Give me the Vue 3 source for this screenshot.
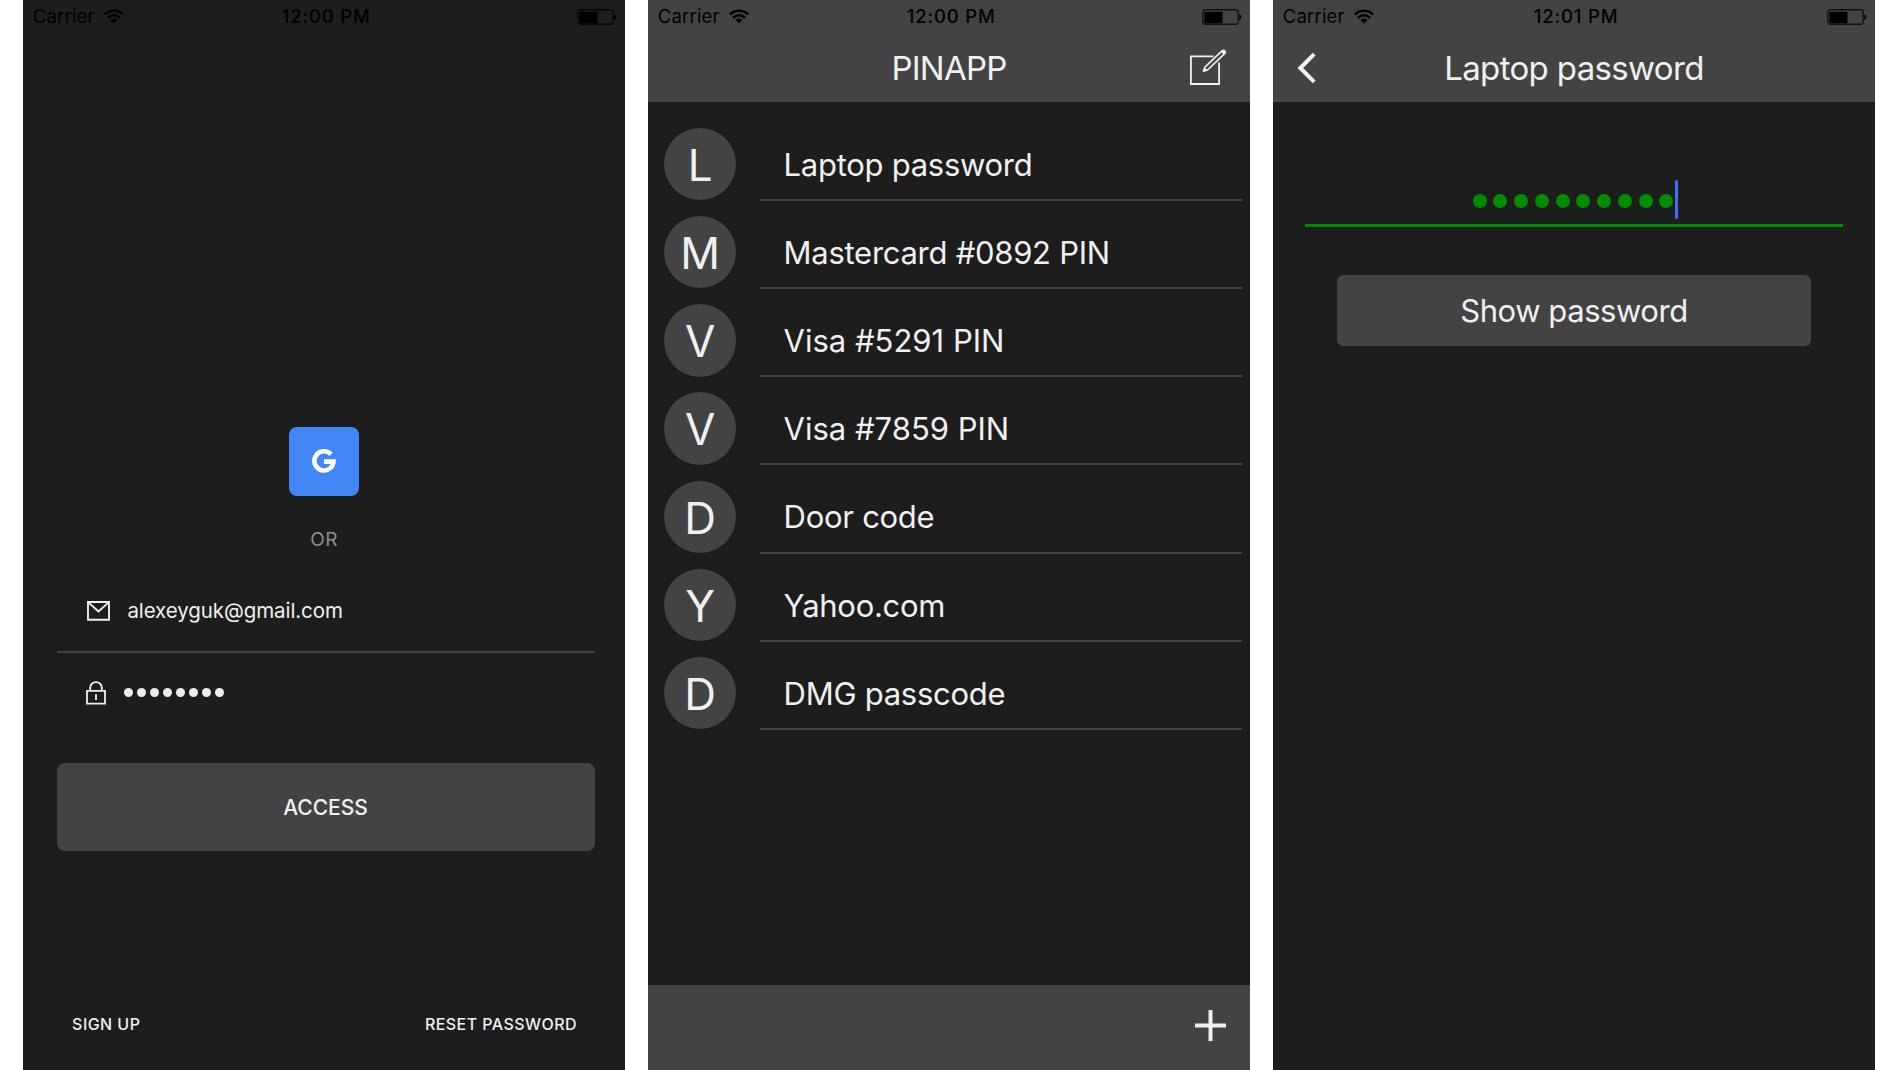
<script setup>
const screens = [
  { id: 'login', time: '12:00 PM' },
  { id: 'list', time: '12:00 PM' },
  { id: 'detail', time: '12:01 PM' },
]

const items = [
  'Laptop password',
  'Mastercard #0892 PIN',
  'Visa #5291 PIN',
  'Visa #7859 PIN',
  'Door code',
  'Yahoo.com',
  'DMG passcode',
]
</script>

<template>
  <main class="board">
    <section v-for="screen in screens" :key="screen.id" class="phone" :class="screen.id">
      <header class="top">
        <div class="status">
          <div class="carrier">
            <span>Carrier</span>
            <svg width="20" height="15" viewBox="0 0 20 15">
              <g fill="none" stroke="#000" stroke-width="2.5">
                <path d="M0.9 5.4a12.9 12.9 0 0 1 18.2 0" />
                <path d="M4.1 8.8a8.3 8.3 0 0 1 11.8 0" />
              </g>
              <path d="M10 14.4L6.5 10.9a5 5 0 0 1 7 0z" fill="#000" />
            </svg>
          </div>
          <time>{{ screen.time }}</time>
          <svg class="battery" width="40" height="16" viewBox="0 0 40 16">
            <rect x="0.75" y="0.75" width="35.5" height="14.5" rx="2.5" fill="none" stroke="#000" stroke-opacity="0.75" stroke-width="1.3" />
            <rect x="2.3" y="2.8" width="18.2" height="11.4" fill="#000" />
            <path d="M37.3 5.3c2.6.8 2.6 5 0 5.8z" fill="#000" />
          </svg>
        </div>
        <div v-if="screen.id !== 'login'" class="nav">
          <svg v-if="screen.id === 'detail'" class="back" width="20" height="32" viewBox="0 0 20 32">
            <path d="M17.2 2.2L3.3 16l13.9 13.8" fill="none" stroke="#f0f0f0" stroke-width="4" />
          </svg>
          <h1>{{ screen.id === 'list' ? 'PINAPP' : 'Laptop password' }}</h1>
          <svg v-if="screen.id === 'list'" class="compose" width="38" height="37" viewBox="0 0 38 37">
            <path d="M24.5 7.3H1.9V35h28.2V13.6" fill="none" stroke="#f0f0f0" stroke-width="1.8" />
            <path d="M14.5 22.2l1.4-4.1L33 1.9q1.6-1.2 2.7 0t0 2.7L18.5 21z" fill="none" stroke="#f0f0f0" stroke-width="1.6" stroke-linejoin="round" />
            <path d="M31.8 2.8L33.2 1.5q1.5-1 2.7.1t.1 2.8L34.7 5.7zM14.3 22.4l1.2-4 3 2.8z" fill="#f0f0f0" />
          </svg>
        </div>
      </header>

      <div v-if="screen.id === 'login'" class="login-body">
        <button class="google" aria-label="Google">
          <svg width="24" height="24" viewBox="0 0 24 24">
            <path d="M19 5.4A9.6 9.6 0 1 0 21.5 12.6H12" fill="none" stroke="#fff" stroke-width="4.6" />
          </svg>
        </button>
        <p class="or">OR</p>
        <div class="field email">
          <svg width="23" height="20" viewBox="0 0 23 20">
            <path d="M1 1h21v17.8H1zM1.6 1.6L11.5 10.4 21.4 1.6" fill="none" stroke="#f0f0f0" stroke-width="1.9" />
          </svg>
          <span>alexeyguk@gmail.com</span>
        </div>
        <div class="field secret">
          <svg width="20" height="24" viewBox="0 0 20 24">
            <path d="M1 9.8h18v12.9H1zM4.2 9.8V6.6a5.8 5.4 0 0 1 11.6 0v3.2M10 13.2v5.8" fill="none" stroke="#f0f0f0" stroke-width="1.8" />
          </svg>
          <div class="dots"><i v-for="n in 8" :key="n"></i></div>
        </div>
        <button class="access">ACCESS</button>
        <footer class="links"><a>SIGN UP</a><a>RESET PASSWORD</a></footer>
      </div>

      <template v-else-if="screen.id === 'list'">
        <ul class="entries">
          <li v-for="item in items" :key="item">
            <span class="avatar">{{ item[0] }}</span>
            <span class="label" :class="{ card: item.startsWith('Visa') }">{{ item }}</span>
          </li>
        </ul>
        <footer class="toolbar">
          <svg width="31" height="31" viewBox="0 0 31 31">
            <path d="M15.5 0v31M0 15.5h31" stroke="#f0f0f0" stroke-width="4" />
          </svg>
        </footer>
      </template>

      <div v-else class="detail-body">
        <div class="password">
          <div class="dots"><i v-for="n in 10" :key="n"></i></div>
          <b class="caret"></b>
        </div>
        <button class="show">Show password</button>
      </div>
    </section>
  </main>
</template>

<style>
body {
  margin: 0;
  background: #fff;
}
</style>

<style scoped>
.board {
  box-sizing: border-box;
  display: flex;
  gap: 23px;
  width: 1899px;
  height: 1070px;
  padding: 0 24px 0 23px;
  overflow: hidden;
  font-family: Inter, "Liberation Sans", sans-serif;
  color: #f0f0f0;
}
.phone {
  display: flex;
  flex-direction: column;
  width: 602px;
  height: 1070px;
  background: #1d1d1d;
}
button {
  border: 0;
  padding: 0;
  font-family: inherit;
  color: inherit;
}
svg {
  display: block;
  flex: none;
}

.top {
  flex: none;
}
.list .top,
.detail .top {
  height: 102.4px;
  background: #434343;
}
.status {
  display: grid;
  grid-template-columns: 1fr auto 1fr;
  align-items: center;
  box-sizing: border-box;
  height: 33px;
  padding: 0 8.5px 0 9.7px;
  font-size: 18.5px;
  line-height: 33px;
  color: #000;
}
.carrier {
  display: flex;
  align-items: center;
  gap: 9px;
  letter-spacing: 0.2px;
}
.carrier svg {
  margin-bottom: 1px;
}
.status time {
  position: relative;
  left: 1.6px;
  font-weight: 500;
  letter-spacing: 0.85px;
}
.battery {
  justify-self: end;
}
.nav {
  display: grid;
  grid-template-columns: 60px 1fr 60px;
  align-items: center;
  height: 69.7px;
}
.nav h1 {
  grid-column: 2;
  margin: 0;
  font-size: 33px;
  font-weight: 400;
  line-height: 40px;
  letter-spacing: -0.65px;
  text-align: center;
}
.list .nav h1 {
  letter-spacing: -0.8px;
}
.back {
  margin-left: 23.7px;
}
.compose {
  margin-left: -1.2px;
  margin-bottom: 1px;
}

.login-body {
  display: flex;
  flex-direction: column;
  flex: 1;
  padding: 394px 30.5px 0 33.5px;
}
.google {
  display: grid;
  place-items: center;
  align-self: center;
  width: 69.4px;
  height: 69.4px;
  margin-right: 3px;
  border-radius: 8px;
  background: #4387f6;
}
.google svg {
  margin-bottom: 1px;
}
.or {
  margin: 31.3px 3px 0 0;
  font-size: 19px;
  line-height: 24px;
  letter-spacing: 0.3px;
  text-align: center;
  color: #8d8d8d;
}
.field {
  display: flex;
  align-items: center;
  box-sizing: border-box;
}
.email {
  height: 82px;
  margin-top: 19px;
  padding: 0 0 0 30.5px;
  border-bottom: 2px solid #414141;
  font-size: 20.5px;
  line-height: 26px;
  letter-spacing: -0.08px;
}
.email span {
  margin-left: 17.4px;
}
.secret {
  height: 80px;
  padding-left: 29.5px;
}
.dots {
  display: flex;
}
.dots i {
  border-radius: 50%;
}
.secret .dots {
  gap: 3.7px;
  margin: 0 0 1px 18.2px;
}
.secret .dots i {
  width: 9.3px;
  height: 9.3px;
  background: #ececec;
}
.access {
  height: 88.2px;
  margin-top: 30.3px;
  border-radius: 8px;
  background: #434343;
  font-size: 21px;
  font-weight: 500;
}
.links {
  display: flex;
  justify-content: space-between;
  margin-top: 163.2px;
  padding: 0 17.5px 0 15.6px;
  font-size: 16px;
  font-weight: 500;
  line-height: 20px;
  letter-spacing: 0.45px;
}

.entries {
  flex: 1;
  margin: 0;
  padding: 10.3px 8px 0 16px;
  list-style: none;
}
.entries li {
  display: flex;
  gap: 24px;
  box-sizing: border-box;
  height: 88.2px;
  padding-top: 15.2px;
}
.avatar {
  flex: none;
  box-sizing: border-box;
  width: 72.3px;
  height: 72.3px;
  padding-top: 1px;
  border-radius: 50%;
  background: #434343;
  font-size: 44px;
  line-height: 73px;
  text-align: center;
}
.label {
  display: flex;
  align-items: center;
  flex: 1;
  box-sizing: border-box;
  padding: 1.5px 0 0 23.3px;
  border-bottom: 2px solid #414141;
  font-size: 31px;
  letter-spacing: -0.28px;
}
.label.card {
  letter-spacing: 0;
}
.toolbar {
  display: flex;
  justify-content: flex-end;
  box-sizing: border-box;
  height: 85.3px;
  padding: 25.3px 24px 0 0;
  background: #434343;
}

.detail-body {
  display: flex;
  flex-direction: column;
  padding: 77.3px 32px 0;
}
.password {
  display: flex;
  align-items: center;
  justify-content: center;
  height: 44.7px;
  padding: 0 0 0 3px;
  border-bottom: 3px solid #008c00;
}
.password .dots {
  gap: 6.78px;
  margin-top: -2px;
}
.password .dots i {
  width: 14px;
  height: 14px;
  background: #008c00;
}
.caret {
  width: 3px;
  height: 39px;
  margin: -5px 0 0 2px;
  border-radius: 1.5px;
  background: #436bf3;
}
.show {
  height: 71px;
  margin: 48px 32px 0;
  border-radius: 6px;
  background: #434343;
  font-size: 31px;
  letter-spacing: -0.45px;
}
</style>
